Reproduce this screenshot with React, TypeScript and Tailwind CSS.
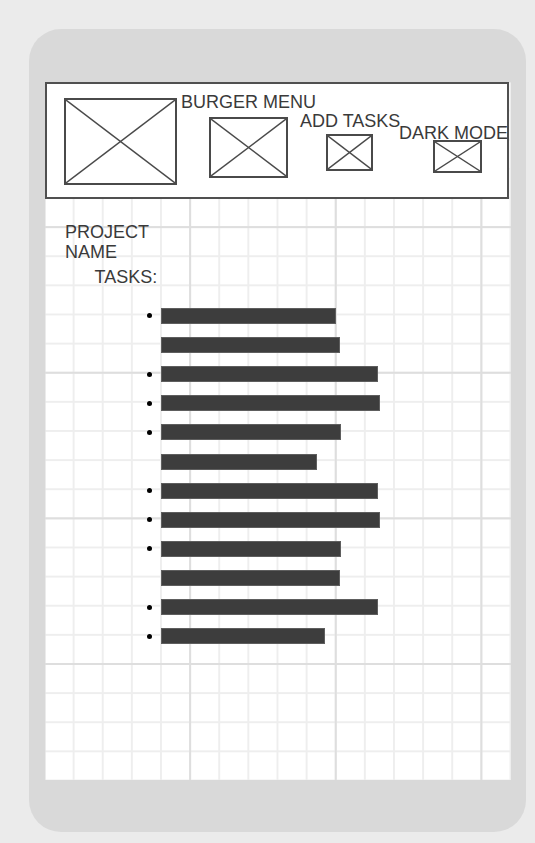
import React from "react";

function XBox({ className }: { className: string }) {
  return (
    <div className={`shrink-0 border-2 border-[#4a4a4a] bg-white ${className}`}>
      <svg className="block h-full w-full" viewBox="0 0 100 100" preserveAspectRatio="none">
        <line x1="0" y1="0" x2="100" y2="100" stroke="#4a4a4a" strokeWidth="1.4" vectorEffect="non-scaling-stroke" />
        <line x1="100" y1="0" x2="0" y2="100" stroke="#4a4a4a" strokeWidth="1.4" vectorEffect="non-scaling-stroke" />
      </svg>
    </div>
  );
}

const tasks: { w: number; bullet: boolean }[] = [
  { w: 175, bullet: true },
  { w: 179, bullet: false },
  { w: 217, bullet: true },
  { w: 219, bullet: true },
  { w: 180, bullet: true },
  { w: 156, bullet: false },
  { w: 217, bullet: true },
  { w: 219, bullet: true },
  { w: 180, bullet: true },
  { w: 179, bullet: false },
  { w: 217, bullet: true },
  { w: 164, bullet: true },
];

export default function App() {
  return (
    <div
      className="min-h-[843px] w-[535px] bg-[#ebebeb] pl-[29px] pt-[29px] text-[#3a3a3a]"
      style={{ fontFamily: '"Liberation Sans", Arial, sans-serif' }}
    >
      <div className="h-[803px] w-[497px] rounded-[32px] bg-[#d9d9d9] pl-[16px] pt-[53px]">
        <div className="h-[698px] w-[466px] bg-white [background-image:linear-gradient(to_right,#dedede_2px,transparent_2px),linear-gradient(to_bottom,#dedede_2px,transparent_2px),linear-gradient(to_right,#eeeeee_2px,transparent_2px),linear-gradient(to_bottom,#eeeeee_2px,transparent_2px)] [background-size:145.625px_145.625px,145.625px_145.625px,29.125px_29.125px,29.125px_29.125px] [background-position:-1.5px_-1.5px]">
          <header className="relative flex h-[117px] w-[464px] items-start border-2 border-[#505050] bg-white">
            <XBox className="ml-[17px] mt-[14px] h-[87px] w-[113px]" />
            <XBox className="ml-[32px] mt-[33px] h-[61px] w-[79px]" />
            <XBox className="ml-[38px] mt-[50px] h-[37px] w-[47px]" />
            <XBox className="ml-[60px] mt-[56px] h-[33px] w-[49px]" />
            <span className="absolute left-[134px] top-[8px] whitespace-nowrap text-[18px] leading-[20px]">BURGER MENU</span>
            <span className="absolute left-[253px] top-[26.5px] whitespace-nowrap text-[18px] leading-[20px]">ADD TASKS</span>
            <span className="absolute left-[352px] top-[39px] whitespace-nowrap text-[18px] leading-[20px]">DARK MODE</span>
          </header>
          <main className="pl-[20px] pt-[22.5px]">
            <h1 className="w-[100px] text-[18px] leading-[20px]">PROJECT NAME</h1>
            <h2 className="ml-[29.6px] mt-[5.7px] text-[18px] leading-[20px]">TASKS:</h2>
            <ul className="ml-[82px] mt-[20.8px] flex flex-col gap-[13.125px]">
              {tasks.map((t, i) => (
                <li key={i} className="flex h-[16px] items-center">
                  <span className={`mr-[9px] h-[5px] w-[5px] rounded-full ${t.bullet ? "bg-black" : "bg-transparent"}`} />
                  <span className="h-[16px] border border-[#5e5e5e] bg-[#3d3d3d]" style={{ width: t.w }} />
                </li>
              ))}
            </ul>
          </main>
        </div>
      </div>
    </div>
  );
}
